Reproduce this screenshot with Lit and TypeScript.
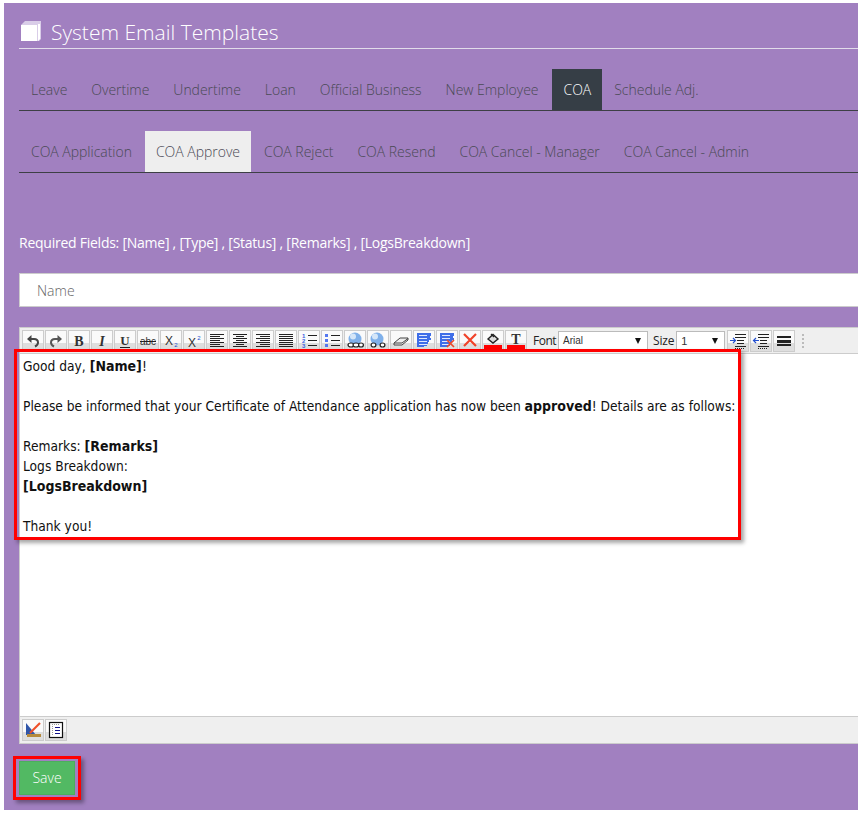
import { LitElement, html, css, svg } from "lit";
import { customElement } from "lit/decorators.js";

const lines = (ys: number[], x1 = 2, x2 = 16, c = "#222") =>
  ys.map((y) => svg`<line x1=${x1} x2=${x2} y1=${y + 0.5} y2=${y + 0.5} stroke=${c} />`);

const jag = svg`<path d="M2 1 H16 V4 H15 V6 H16 V8 H14 V10 H13 V12 H12 V14 H9 V15 H2 Z" fill="#3f6ee8"/>`;

const ICONS: Record<string, unknown> = {
  undo: svg`<path d="M4 7 H10 Q14 7 14 10.5 Q14 13 11 14.5" fill="none" stroke="#444" stroke-width="2"/><path d="M7.5 3 L3 7 L7.5 11 Z" fill="#444"/>`,
  redo: svg`<path d="M14 7 H8 Q4 7 4 10.5 Q4 13 7 14.5" fill="none" stroke="#555" stroke-width="2"/><path d="M10.5 3 L15 7 L10.5 11 Z" fill="#555"/>`,
  bold: svg`<text x="9" y="14" text-anchor="middle" class="gl" font-weight="700" font-size="14">B</text>`,
  italic: svg`<text x="9" y="14" text-anchor="middle" class="gl" font-style="italic" font-weight="700" font-size="14">I</text>`,
  under: svg`<text x="9" y="13" text-anchor="middle" class="gl" font-weight="700" font-size="13">U</text><line x1="4" x2="14" y1="15.5" y2="15.5" stroke="#222"/>`,
  strike: svg`<text x="9" y="13" text-anchor="middle" class="sm" font-size="10">abc</text><line x1="1" x2="17" y1="9.5" y2="9.5" stroke="#222"/>`,
  sub: svg`<text x="7" y="13" text-anchor="middle" class="sm" font-size="12">X</text><text x="14" y="15" text-anchor="middle" class="sm" font-size="6" style="fill:#2350d0">2</text>`,
  sup: svg`<text x="7" y="15" text-anchor="middle" class="sm" font-size="12">X</text><text x="14" y="8" text-anchor="middle" class="sm" font-size="6" style="fill:#2350d0">2</text>`,
  left: [lines([2, 6, 10, 14]), lines([4, 8, 12], 2, 12)],
  center: [lines([2, 6, 10, 14]), lines([4, 8, 12], 5, 13)],
  right: [lines([2, 6, 10, 14]), lines([4, 8, 12], 6, 16)],
  justify: lines([2, 4, 6, 8, 10, 12, 14], 2, 16),
  ol: svg`<text x="2" y="6" class="sm" font-size="6" font-weight="700" style="fill:#3a62e0">1</text><text x="2" y="11" class="sm" font-size="6" font-weight="700" style="fill:#3a62e0">2</text><text x="2" y="16" class="sm" font-size="6" font-weight="700" style="fill:#3a62e0">3</text>${lines([3, 8, 13], 8, 17)}`,
  ul: svg`<rect x="2" y="2" width="3" height="3" fill="#5578f0"/><rect x="2" y="7" width="3" height="3" fill="#5578f0"/><rect x="2" y="12" width="3" height="3" fill="#5578f0"/>${lines([3, 8, 13], 8, 17)}`,
  link: svg`<circle cx="9" cy="7" r="6.5" fill="#7fb0ea"/><circle cx="7" cy="4.5" r="3" fill="#d5e6f8"/><ellipse cx="5" cy="13" rx="3" ry="2" fill="#fff" stroke="#222" stroke-width="1.2"/><ellipse cx="10" cy="13" rx="3" ry="2" fill="#fff" stroke="#222" stroke-width="1.2"/><ellipse cx="15" cy="13" rx="2.4" ry="2" fill="#fff" stroke="#222" stroke-width="1.2"/>`,
  unlink: svg`<circle cx="8" cy="7" r="6.5" fill="#7fb0ea"/><circle cx="6" cy="4.5" r="3" fill="#d5e6f8"/><ellipse cx="4.5" cy="13" rx="2.4" ry="2" fill="#fff" stroke="#222" stroke-width="1.2"/><ellipse cx="13.5" cy="13" rx="2.4" ry="2" fill="#fff" stroke="#222" stroke-width="1.2"/>`,
  eraser: svg`<path d="M2 11 L8 6 H16 V8 L10 13 H2 Z" fill="#eee" stroke="#444"/><path d="M2 11 H10 L16 6.5" fill="none" stroke="#444"/>`,
  fmt: svg`${jag}${lines([3, 6, 9, 12], 4, 12, "#dfe8ff")}`,
  fmtx: svg`${jag}${lines([3, 6, 9, 12], 4, 12, "#dfe8ff")}<path d="M9 8 L16 15 M16 8 L9 15" stroke="#ea4a2a" stroke-width="1.7"/>`,
  x: svg`<path d="M3 2 L15 14 M15 2 L3 14" stroke="#f0432a" stroke-width="2.2"/>`,
  bg: svg`<path d="M4 7 L9 2.5 L14 7 L9 11 Z" fill="#ddd" stroke="#222" stroke-width="1.4"/><path d="M7 2 L10 5" stroke="#222" stroke-width="1.2"/><rect x="0" y="13" width="18" height="5" fill="#f00"/>`,
  color: svg`<text x="9" y="12" text-anchor="middle" class="gl" font-weight="700" font-size="14">T</text><rect x="0" y="13" width="18" height="5" fill="#f00"/>`,
  indent: svg`<path d="M1 8.5 H6 M4 6 L6.5 8.5 L4 11" fill="none" stroke="#2350d0" stroke-width="1.2"/>${lines([2, 5], 6, 17)}${lines([8, 11], 8, 15)}<line x1="6" x2="17" y1="14.5" y2="14.5" stroke="#222"/><line x1="6" x2="15" y1="16.5" y2="16.5" stroke="#222" stroke-dasharray="1 1"/>`,
  outdent: svg`<path d="M7 8.5 H2 M4 6 L1.5 8.5 L4 11" fill="none" stroke="#2350d0" stroke-width="1.2"/>${lines([2, 5], 6, 17)}${lines([8, 11], 8, 15)}<line x1="6" x2="17" y1="14.5" y2="14.5" stroke="#222"/><line x1="6" x2="15" y1="16.5" y2="16.5" stroke="#222" stroke-dasharray="1 1"/>`,
  hr: svg`<rect x="2" y="4" width="14" height="2" fill="#222"/><rect x="2" y="8" width="14" height="3" fill="#222"/><rect x="2" y="12" width="14" height="2" fill="#222"/>`,
  rule: svg`<path d="M2 2 L2 14 L12 14 Z" fill="#2f55a8"/><path d="M6 12 L16 2" stroke="#f0502a" stroke-width="2.2"/><rect x="3" y="13" width="14" height="3" fill="#b58a3c"/>`,
  src: svg`<rect x="2.5" y="1.5" width="13" height="15" fill="#fff" stroke="#111" stroke-width="1.2"/>${lines([6, 9, 12], 8, 13, "#11118a")}<line x1="5.5" x2="5.5" y1="3" y2="15" stroke="#999" stroke-dasharray="1 1"/><line x1="5" x2="13" y1="3.5" y2="3.5" stroke="#999" stroke-dasharray="1 1"/>`,
};

const TOP = ["Leave", "Overtime", "Undertime", "Loan", "Official Business", "New Employee", "COA", "Schedule Adj."];
const SUB = ["COA Application", "COA Approve", "COA Reject", "COA Resend", "COA Cancel - Manager", "COA Cancel - Admin"];
const TOOLS = ["undo", "redo", "bold", "italic", "under", "strike", "sub", "sup", "left", "center", "right", "justify", "ol", "ul", "link", "unlink", "eraser", "fmt", "fmtx", "x", "bg", "color"];

@customElement("app-root")
export class AppRoot extends LitElement {
  static styles = css`
    :host {
      display: block;
      width: 858px;
      height: 814px;
      background: #fff;
      overflow: hidden;
      position: relative;
      font-family: "Open Sans", sans-serif;
    }
    .page {
      margin: 3px 0 0 4px;
      width: 854px;
      height: 807px;
      background: #a180c0;
      padding: 0 0 0 15px;
      box-sizing: border-box;
    }
    .title {
      height: 46px;
      box-sizing: border-box;
      border-bottom: 1px solid #e2dcea;
      display: flex;
      align-items: flex-end;
      gap: 9px;
      color: #fff;
      font-size: 21px;
      font-weight: 300;
      line-height: 30px;
      padding: 0 0 0 1px;
    }
    .title svg { margin-bottom: 6px; }
    .title span { position: relative; top: -1px; }
    .tabs {
      display: flex;
      height: 42px;
      box-sizing: border-box;
      border-bottom: 1px solid #3d3f45;
      font-size: 14px;
      font-weight: 300;
      color: #4a4a55;
      letter-spacing: -0.02px;
    }
    .tabs.a { margin-top: 20px; }
    .tabs.b { margin-top: 20px; }
    .tab {
      padding: 0 12px;
      line-height: 41px;
      white-space: nowrap;
    }
    .tab.dark { background: #363e46; color: #fff; padding: 0 11px; margin-left: 2px; }
    .tab.light { background: #eee; padding: 0 11px; margin: 0 1px; }
    .req {
      margin-top: 60px;
      color: #fff;
      font-size: 14px;
      font-weight: 400;
      letter-spacing: -0.25px;
      line-height: 20px;
    }
    .field {
      margin-top: 20px;
      width: 860px;
      height: 34px;
      box-sizing: border-box;
      background: #fff;
      border: 1px solid #ccc;
      padding-left: 17px;
      font-size: 14px;
      font-weight: 300;
      line-height: 34px;
      color: #666;
    }
    .editor {
      margin-top: 20px;
      width: 860px;
      height: 417px;
      box-sizing: border-box;
      border: 1px solid #ccc;
      background: #fff;
      display: flex;
      flex-direction: column;
    }
    .bar {
      background: #efefef;
      display: flex;
      align-items: center;
      flex: none;
    }
    .bar.top {
      height: 25px;
      border-bottom: 1px solid #ccc;
      padding: 0 0 0 2px;
      font-size: 12px;
      color: #222;
      gap: 1px;
    }
    .bar.bottom {
      height: 26px;
      border-top: 1px solid #ccc;
      padding-left: 2px;
      gap: 1px;
    }
    .btn {
      width: 20px;
      height: 20px;
      border: 1px solid #ccc;
      background: linear-gradient(#fafafa 60%, #dedede 60%);
      display: flex;
      align-items: center;
      justify-content: center;
      flex: none;
    }
    .gl { font-family: "Liberation Serif", serif; fill: #333; }
    .sm { font-family: "Liberation Sans", sans-serif; fill: #333; }
    .lbl { font-weight: 400; letter-spacing: -0.5px; }
    .lbl.f { margin-left: 5px; }
    .lbl.s { margin-left: 4px; letter-spacing: -0.2px; }
    .sel {
      height: 20px;
      box-sizing: border-box;
      border: 1px solid #bbb;
      background: #fff;
      display: flex;
      align-items: center;
      justify-content: space-between;
      padding: 0 6px 0 4px;
      font-family: "Liberation Sans", sans-serif;
      font-size: 10px;
      margin-left: 1px;
      color: #333;
    }
    .sel.font { width: 90px; }
    .sel.size { width: 49px; margin-left: 1px; font-size: 11px; }
    .arrow {
      width: 0; height: 0;
      border-left: 3.5px solid transparent;
      border-right: 3.5px solid transparent;
      border-top: 6px solid #111;
    }
    .gap { width: 0; flex: none; }
    .grip {
      margin-left: 6px;
      width: 2px;
      height: 14px;
      background: repeating-linear-gradient(#bbb 0 2px, transparent 2px 4px);
    }
    .body {
      flex: 1;
      padding: 2px 0 0 3px;
      font-family: "DejaVu Sans Condensed", "DejaVu Sans", sans-serif;
      font-stretch: condensed;
      font-size: 13.67px;
      line-height: 20px;
      color: #111;
      white-space: nowrap;
    }
    .body b { font-weight: 700; font-size: 14px; }
    .save {
      margin-top: 17px;
      width: 56px;
      height: 34px;
      box-sizing: border-box;
      background: #52b963;
      border: 1px solid #4cae5c;
      color: #fff;
      font-size: 14px;
      font-weight: 300;
      padding-bottom: 1px;
      display: flex;
      align-items: center;
      justify-content: center;
    }
    .mark {
      position: absolute;
      box-sizing: border-box;
      border: 3px solid #f00;
      box-shadow: 3px 3px 4px rgba(0, 0, 0, 0.35);
      pointer-events: none;
    }
    .mark.m1 { left: 14px; top: 349px; width: 727px; height: 191px; }
    .mark.m2 { left: 13px; top: 756px; width: 68px; height: 44px; }
  `;

  private btn(name: string) {
    return html`<div class="btn"><svg width="18" height="18" viewBox="0 0 18 18">${ICONS[name]}</svg></div>`;
  }

  render() {
    return html`
      <div class="page">
        <div class="title">
          <svg width="22" height="22" viewBox="0 0 22 22">
            <path d="M1 5 L5 1 H21 V19 L19 21 H1 Z" fill="#d9cde8"/>
            <path d="M1 5 H17 V21 H1 Z" fill="#fff"/>
            <path d="M18 4 H20 V19 L18 21 Z" fill="#fff"/>
          </svg>
          <span>System Email Templates</span>
        </div>
        <div class="tabs a">
          ${TOP.map((t) => html`<div class="tab ${t === "COA" ? "dark" : ""}">${t}</div>`)}
        </div>
        <div class="tabs b">
          ${SUB.map((t) => html`<div class="tab ${t === "COA Approve" ? "light" : ""}">${t}</div>`)}
        </div>
        <div class="req">Required Fields: [Name] , [Type] , [Status] , [Remarks] , [LogsBreakdown]</div>
        <div class="field">Name</div>
        <div class="editor">
          <div class="bar top">
            ${TOOLS.map((n) => this.btn(n))}
            <span class="lbl f">Font</span>
            <div class="sel font">Arial<span class="arrow"></span></div>
            <span class="lbl s">Size</span>
            <div class="sel size">1<span class="arrow"></span></div>
            <span class="gap"></span>
            ${this.btn("indent")}${this.btn("outdent")}${this.btn("hr")}
            <span class="grip"></span>
          </div>
          <div class="body">
            Good day, <b>[Name]</b>!<br /><br />
            Please be informed that your Certificate of Attendance application has now been <b>approved</b>! Details are as follows:<br /><br />
            Remarks: <b>[Remarks]</b><br />
            Logs Breakdown:<br />
            <b>[LogsBreakdown]</b><br /><br />
            Thank you!
          </div>
          <div class="bar bottom">${this.btn("rule")}${this.btn("src")}</div>
        </div>
        <div class="save">Save</div>
      </div>
      <div class="mark m1"></div>
      <div class="mark m2"></div>
    `;
  }
}
